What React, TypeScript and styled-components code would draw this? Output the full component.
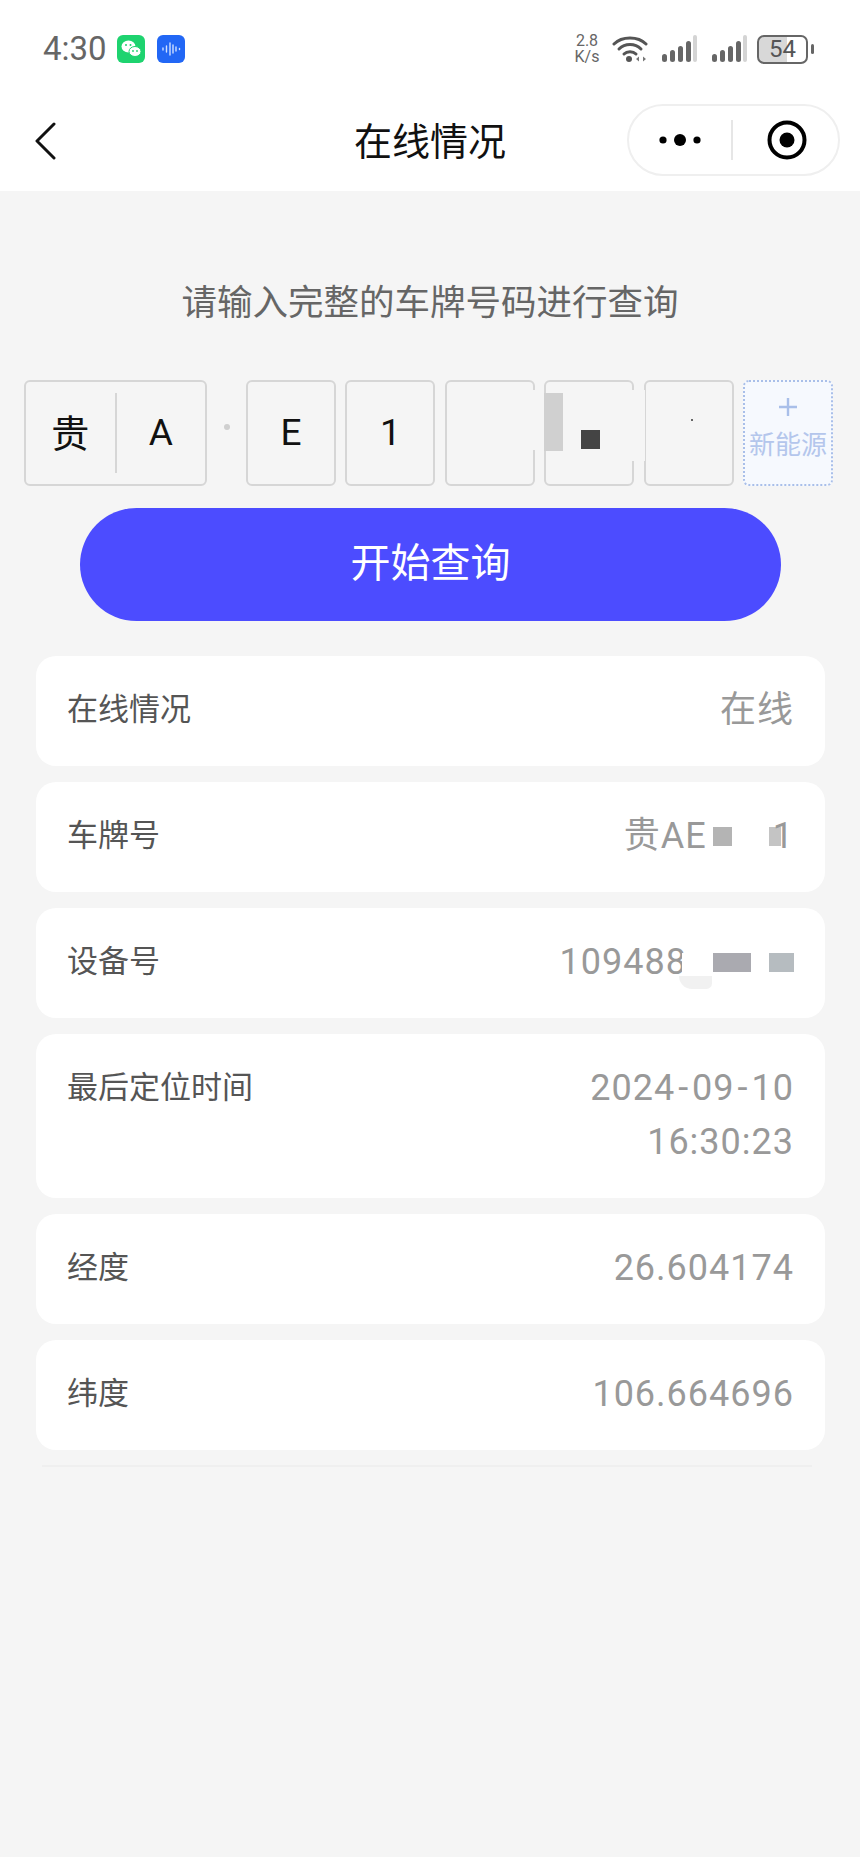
import React from "react";
import styled, { createGlobalStyle } from "styled-components";

const GlobalStyle = createGlobalStyle`
  html, body {
    margin: 0;
    padding: 0;
    background: #f5f5f5;
  }
  * {
    box-sizing: border-box;
  }
  body {
    font-family: Roboto, "Noto Sans CJK SC", "Noto Sans", sans-serif;
  }
`;

const Page = styled.div`
  width: 860px;
  min-height: 1857px;
  background: #f5f5f5;
  display: flex;
  flex-direction: column;
`;

const Top = styled.div`
  background: #ffffff;
  height: 191px;
`;

const StatusBar = styled.div`
  height: 96px;
  padding: 32px 46px 0 43px;
  display: flex;
  justify-content: space-between;
  align-items: flex-start;
`;

const StatusLeft = styled.div`
  display: flex;
  align-items: center;
  height: 34px;
`;

const Clock = styled.span`
  font-size: 33px;
  line-height: 34px;
  color: #666666;
  width: 74px;
`;

const AppBadge = styled.svg`
  display: block;
  margin-right: 12px;
`;

const StatusRight = styled.div`
  display: flex;
  align-items: center;
  height: 34px;
`;

const Speed = styled.div`
  font-size: 16px;
  line-height: 16px;
  color: #666666;
  text-align: center;
  width: 30px;
  margin-right: 10px;
`;

const StatusIcon = styled.svg<{ $gap?: number }>`
  display: block;
  margin-right: ${(p) => p.$gap ?? 14}px;
`;

const Battery = styled.div`
  width: 51px;
  height: 29px;
  border: 2px solid #666666;
  border-radius: 7px;
  overflow: hidden;
  font-size: 24px;
  line-height: 25px;
  color: #555555;
  text-align: center;
  background: linear-gradient(to right, #d8d8d8 60%, #ffffff 60%);
`;

const BatteryTip = styled.div`
  width: 3px;
  height: 10px;
  margin-left: 3px;
  border-radius: 2px;
  background: #666666;
`;

const Nav = styled.div`
  height: 95px;
  padding: 8px 20px 0;
  display: grid;
  grid-template-columns: 1fr auto 1fr;
  align-items: start;
`;

const BackIcon = styled.svg`
  display: block;
  margin: 18px 0 0 14px;
`;

const Title = styled.div`
  font-size: 38px;
  line-height: 71px;
  padding-top: 3px;
  color: #111111;
`;

const Capsule = styled.div`
  justify-self: end;
  width: 213px;
  height: 72px;
  border: 2px solid #efefef;
  border-radius: 36px;
  display: flex;
  align-items: center;
`;

const CapsulePart = styled.div`
  flex: 1 1 0;
  height: 40px;
  display: flex;
  align-items: center;
  justify-content: center;
  & + & {
    border-left: 2px solid #e6e6e6;
    padding-left: 3px;
  }
`;

const Prompt = styled.div`
  margin-top: 88px;
  font-size: 35.5px;
  line-height: 48px;
  color: #666666;
  text-align: center;
`;

const PlateRow = styled.div`
  position: relative;
  margin-top: 53px;
  padding-left: 24px;
  height: 106px;
  display: flex;
`;

const Slot = styled.div`
  width: 90px;
  height: 106px;
  margin-right: 9.4px;
  border: 2px solid #d6d6d6;
  border-radius: 6px;
  font-size: 37px;
  color: #111111;
  padding-bottom: 2px;
  display: flex;
  align-items: center;
  justify-content: center;
`;

const ProvinceSlot = styled(Slot)`
  width: 183px;
  margin-right: 0;
  padding-bottom: 0;
`;

const ProvinceCell = styled.div<{ $cjk?: boolean }>`
  flex: 1;
  height: 80px;
  font-size: ${(p) => (p.$cjk ? 38 : 37)}px;
  padding-bottom: ${(p) => (p.$cjk ? 6 : 2)}px;
  display: flex;
  align-items: center;
  justify-content: center;
  & + & {
    border-left: 2px solid #d6d6d6;
  }
`;

const Separator = styled.div`
  width: 39px;
  display: flex;
  align-items: center;
  justify-content: center;
  &::before {
    content: "";
    width: 6px;
    height: 6px;
    border-radius: 50%;
    background: #cfcfcf;
    margin-top: -12px;
  }
`;

const EnergySlot = styled.div`
  width: 90px;
  height: 106px;
  border: 2px dotted #a9bfe9;
  border-radius: 6px;
  background: #f6f9fe;
  color: #b4c6ec;
  font-size: 26px;
  line-height: 30px;
  text-align: center;
  white-space: nowrap;
  display: flex;
  flex-direction: column;
  align-items: center;
  padding-top: 15px;
`;

const PlusIcon = styled.svg`
  display: block;
  margin-bottom: 13px;
`;

const Patch = styled.div<{ $x: number; $y: number; $w: number; $h: number; $c: string }>`
  position: absolute;
  left: ${(p) => p.$x}px;
  top: ${(p) => p.$y}px;
  width: ${(p) => p.$w}px;
  height: ${(p) => p.$h}px;
  background: ${(p) => p.$c};
`;

const SearchButton = styled.div`
  margin: 22px 0 0 80px;
  width: 701px;
  height: 113px;
  border-radius: 57px;
  background: #4c4cff;
  color: #ffffff;
  font-size: 40px;
  display: flex;
  align-items: center;
  justify-content: center;
  padding-bottom: 10px;
`;

const InfoList = styled.div`
  margin: 35px 35px 0 36px;
  display: flex;
  flex-direction: column;
  gap: 16px;
`;

const InfoCard = styled.div`
  background: #ffffff;
  border-radius: 20px;
  padding: 27px 31px 29px 31px;
  display: flex;
  justify-content: space-between;
  align-items: flex-start;
`;

const Label = styled.div`
  font-size: 31px;
  line-height: 54px;
  color: #555555;
`;

const Value = styled.div`
  font-size: 36px;
  line-height: 54px;
  letter-spacing: 1px;
  color: #999999;
  text-align: right;
  display: flex;
  flex-direction: column;
  align-items: flex-end;
`;

const ValueLine = styled.div`
  position: relative;
  display: flex;
  align-items: center;
`;

const Dash = styled.span`
  padding: 0 3px;
`;

const Blot = styled.span<{ $w: number; $c: string; $gap?: number; $end?: number }>`
  display: block;
  width: ${(p) => p.$w}px;
  height: 19px;
  background: ${(p) => p.$c};
  margin-left: ${(p) => p.$gap ?? 0}px;
  margin-right: ${(p) => p.$end ?? 0}px;
`;

const Smudge = styled.span`
  position: absolute;
  right: 82px;
  top: 41px;
  width: 33px;
  height: 13px;
  background: #f1f1f1;
  border-radius: 0 0 6px 14px;
`;

const EndRule = styled.div`
  margin: 15px 48px 0 42px;
  height: 2px;
  background: #efefef;
`;

const Signal = ({ gap }: { gap?: number }) => (
  <StatusIcon $gap={gap} width="36" height="28" viewBox="0 0 36 28">
    <rect x="0" y="19" width="5" height="8" rx="2.5" fill="#666" />
    <rect x="8" y="15" width="5" height="12" rx="2.5" fill="#666" />
    <rect x="16" y="11" width="5" height="16" rx="2.5" fill="#666" />
    <rect x="24" y="6" width="5" height="21" rx="2.5" fill="#666" />
    <rect x="31" y="0" width="4" height="27" rx="2" fill="#d4d4d4" />
  </StatusIcon>
);

const App = () => (
  <Page>
    <GlobalStyle />
    <Top>
      <StatusBar>
        <StatusLeft>
          <Clock>4:30</Clock>
          <AppBadge width="28" height="28" viewBox="0 0 28 28">
            <rect width="28" height="28" rx="6" fill="#1ed36f" />
            <ellipse cx="11.5" cy="11.5" rx="7" ry="6" fill="#fff" />
            <ellipse cx="18" cy="16.5" rx="6" ry="5" fill="#fff" stroke="#1ed36f" strokeWidth="1" />
            <circle cx="9" cy="10" r="1" fill="#1ed36f" />
            <circle cx="13.5" cy="10" r="1" fill="#1ed36f" />
            <circle cx="16" cy="16" r="0.9" fill="#1ed36f" />
            <circle cx="20" cy="16" r="0.9" fill="#1ed36f" />
          </AppBadge>
          <AppBadge width="28" height="28" viewBox="0 0 28 28">
            <rect width="28" height="28" rx="6" fill="#2267f5" />
            <g stroke="#cfe0ff" strokeWidth="1.4" strokeLinecap="round">
              <path d="M6 13v2M9.5 11v6M13 8v12M16 10v8M19 12v4M22.5 13.5v1" />
            </g>
          </AppBadge>
        </StatusLeft>
        <StatusRight>
          <Speed>
            2.8
            <br />
            K/s
          </Speed>
          <StatusIcon width="36" height="28" viewBox="0 0 36 28">
            <g fill="none" stroke="#555" strokeWidth="3" strokeLinecap="round">
              <path d="M2 9C10 1 26 1 34 9" />
              <path d="M7 14C13 8 23 8 29 14" />
              <path d="M12 19C15 16 21 16 24 19" />
            </g>
            <circle cx="17" cy="24" r="3" fill="#555" />
            <path d="M24 24l3-2.5v5zM34 24l-3-2.5v5z" fill="#777" />
          </StatusIcon>
          <Signal />
          <Signal gap={9} />
          <Battery>54</Battery>
          <BatteryTip />
        </StatusRight>
      </StatusBar>
      <Nav>
        <BackIcon width="22" height="38" viewBox="0 0 22 38">
          <path d="M20 2L3 19l17 17" fill="none" stroke="#111" strokeWidth="3" strokeLinecap="round" strokeLinejoin="round" />
        </BackIcon>
        <Title>在线情况</Title>
        <Capsule>
          <CapsulePart>
            <svg width="44" height="14" viewBox="0 0 44 14">
              <circle cx="5" cy="7" r="3.6" fill="#000" />
              <circle cx="22" cy="7" r="6" fill="#000" />
              <circle cx="39" cy="7" r="3.6" fill="#000" />
            </svg>
          </CapsulePart>
          <CapsulePart>
            <svg width="40" height="40" viewBox="0 0 40 40">
              <circle cx="20" cy="20" r="17.5" fill="none" stroke="#000" strokeWidth="4" />
              <circle cx="20" cy="20" r="7.5" fill="#000" />
            </svg>
          </CapsulePart>
        </Capsule>
      </Nav>
    </Top>
    <Prompt>请输入完整的车牌号码进行查询</Prompt>
    <PlateRow>
      <ProvinceSlot>
        <ProvinceCell $cjk>贵</ProvinceCell>
        <ProvinceCell>A</ProvinceCell>
      </ProvinceSlot>
      <Separator />
      <Slot>E</Slot>
      <Slot>1</Slot>
      <Slot />
      <Slot />
      <Slot />
      <EnergySlot>
        <PlusIcon width="20" height="20" viewBox="0 0 20 20">
          <path d="M10 1v18M1 10h18" stroke="#a9bfe9" strokeWidth="2.4" />
        </PlusIcon>
        新能源
      </EnergySlot>
      <Patch $x={531} $y={10} $w={6} $h={60} $c="#f5f5f5" />
      <Patch $x={631} $y={10} $w={14} $h={71} $c="#f5f5f5" />
      <Patch $x={544} $y={13} $w={19} $h={58} $c="#d0d0d0" />
      <Patch $x={581} $y={50} $w={19} $h={19} $c="#444444" />
      <Patch $x={691} $y={39} $w={2} $h={2} $c="#666666" />
    </PlateRow>
    <SearchButton>开始查询</SearchButton>
    <InfoList>
      <InfoCard>
        <Label>在线情况</Label>
        <Value>在线</Value>
      </InfoCard>
      <InfoCard>
        <Label>车牌号</Label>
        <Value>
          <ValueLine>
            贵AE
            <Blot $w={19} $c="#b4b4b4" $gap={6} />
            <Blot $w={12} $c="#c4c4c4" $gap={37} $end={-8} />1
          </ValueLine>
        </Value>
      </InfoCard>
      <InfoCard>
        <Label>设备号</Label>
        <Value>
          <ValueLine>
            109488
            <Blot $w={8} $c="#ffffff" $gap={-5} />
            <Blot $w={38} $c="#aaaab0" $gap={23} />
            <Blot $w={25} $c="#b6bcc0" $gap={18} />
            <Smudge />
          </ValueLine>
        </Value>
      </InfoCard>
      <InfoCard>
        <Label>最后定位时间</Label>
        <Value>
          <div>
            2024<Dash>-</Dash>09<Dash>-</Dash>10
          </div>
          <div>16:30:23</div>
        </Value>
      </InfoCard>
      <InfoCard>
        <Label>经度</Label>
        <Value>26.604174</Value>
      </InfoCard>
      <InfoCard>
        <Label>纬度</Label>
        <Value>106.664696</Value>
      </InfoCard>
    </InfoList>
    <EndRule />
  </Page>
);

export default App;
